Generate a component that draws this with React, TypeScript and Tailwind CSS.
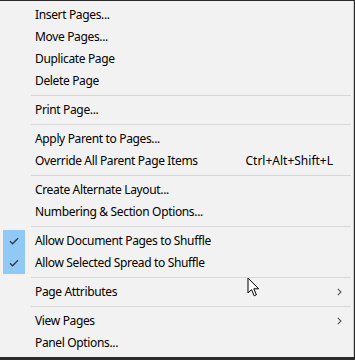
import { ReactNode } from 'react'

type Item =
  | { sep: true }
  | { sep?: false; label: string; shortcut?: string; checked?: boolean; submenu?: boolean }

const items: Item[] = [
  { label: 'Insert Pages...' },
  { label: 'Move Pages...' },
  { label: 'Duplicate Page' },
  { label: 'Delete Page' },
  { sep: true },
  { label: 'Print Page...' },
  { sep: true },
  { label: 'Apply Parent to Pages...' },
  { label: 'Override All Parent Page Items', shortcut: 'Ctrl+Alt+Shift+L' },
  { sep: true },
  { label: 'Create Alternate Layout...' },
  { label: 'Numbering & Section Options...' },
  { sep: true },
  { label: 'Allow Document Pages to Shuffle', checked: true },
  { label: 'Allow Selected Spread to Shuffle', checked: true },
  { sep: true },
  { label: 'Page Attributes', submenu: true },
  { sep: true },
  { label: 'View Pages', submenu: true },
  { label: 'Panel Options...' },
]

function Check() {
  return (
    <svg width="10" height="8" viewBox="0 0 10 8" fill="none">
      <path d="M1 4.2 L3.6 6.8 L9 1.2" stroke="#3a3a3a" strokeWidth="1.3" />
    </svg>
  )
}

function Chevron() {
  return (
    <svg width="5" height="8" viewBox="0 0 5 8" fill="none">
      <path d="M0.8 0.8 L4 4 L0.8 7.2" stroke="#555" strokeWidth="1.1" />
    </svg>
  )
}

function Row({ children, item }: { children: ReactNode; item: Extract<Item, { label: string }> }) {
  return (
    <div className="flex h-[22px] items-center">
      <div className="flex h-full w-[35px] items-center pl-[3px]">
        {item.checked && (
          <div className="flex h-full w-[22px] items-center justify-center bg-[#90c8f6]">
            <Check />
          </div>
        )}
      </div>
      <div className="flex-1 whitespace-nowrap tracking-[-0.35px]">{children}</div>
      {item.shortcut && <div className="mr-[20px] whitespace-nowrap">{item.shortcut}</div>}
      {item.submenu && (
        <div className="mr-[11px] flex items-center">
          <Chevron />
        </div>
      )}
    </div>
  )
}

export default function App() {
  return (
    <div
      className="relative h-[360px] w-[355px] overflow-hidden bg-[#2b2b2b] pt-px text-[12px] text-black"
      style={{ fontFamily: '"Noto Sans", "Open Sans", sans-serif' }}
    >
      <div className="w-[354px] border-r border-[#c8c8c8] bg-[#f2f2f2] pt-[3px] pb-[3px]">
        {items.map((item, i) =>
          item.sep ? (
            <div key={i} className="flex h-[7px] items-center pl-[31px] pr-[2px]">
              <div className="h-px w-full bg-[#d7d7d7]" />
            </div>
          ) : (
            <Row key={i} item={item}>
              {item.label}
            </Row>
          )
        )}
      </div>

      {/* mouse pointer */}
      <svg className="absolute left-[247px] top-[277px]" width="14" height="21" viewBox="0 0 14 21">
        <path
          d="M1 1 L1 16 L4.5 12.6 L7.2 18.8 L9.4 17.8 L6.8 11.8 L11.6 11.8 Z"
          fill="#fff"
          stroke="#000"
          strokeWidth="1"
          strokeLinejoin="round"
        />
      </svg>
    </div>
  )
}
